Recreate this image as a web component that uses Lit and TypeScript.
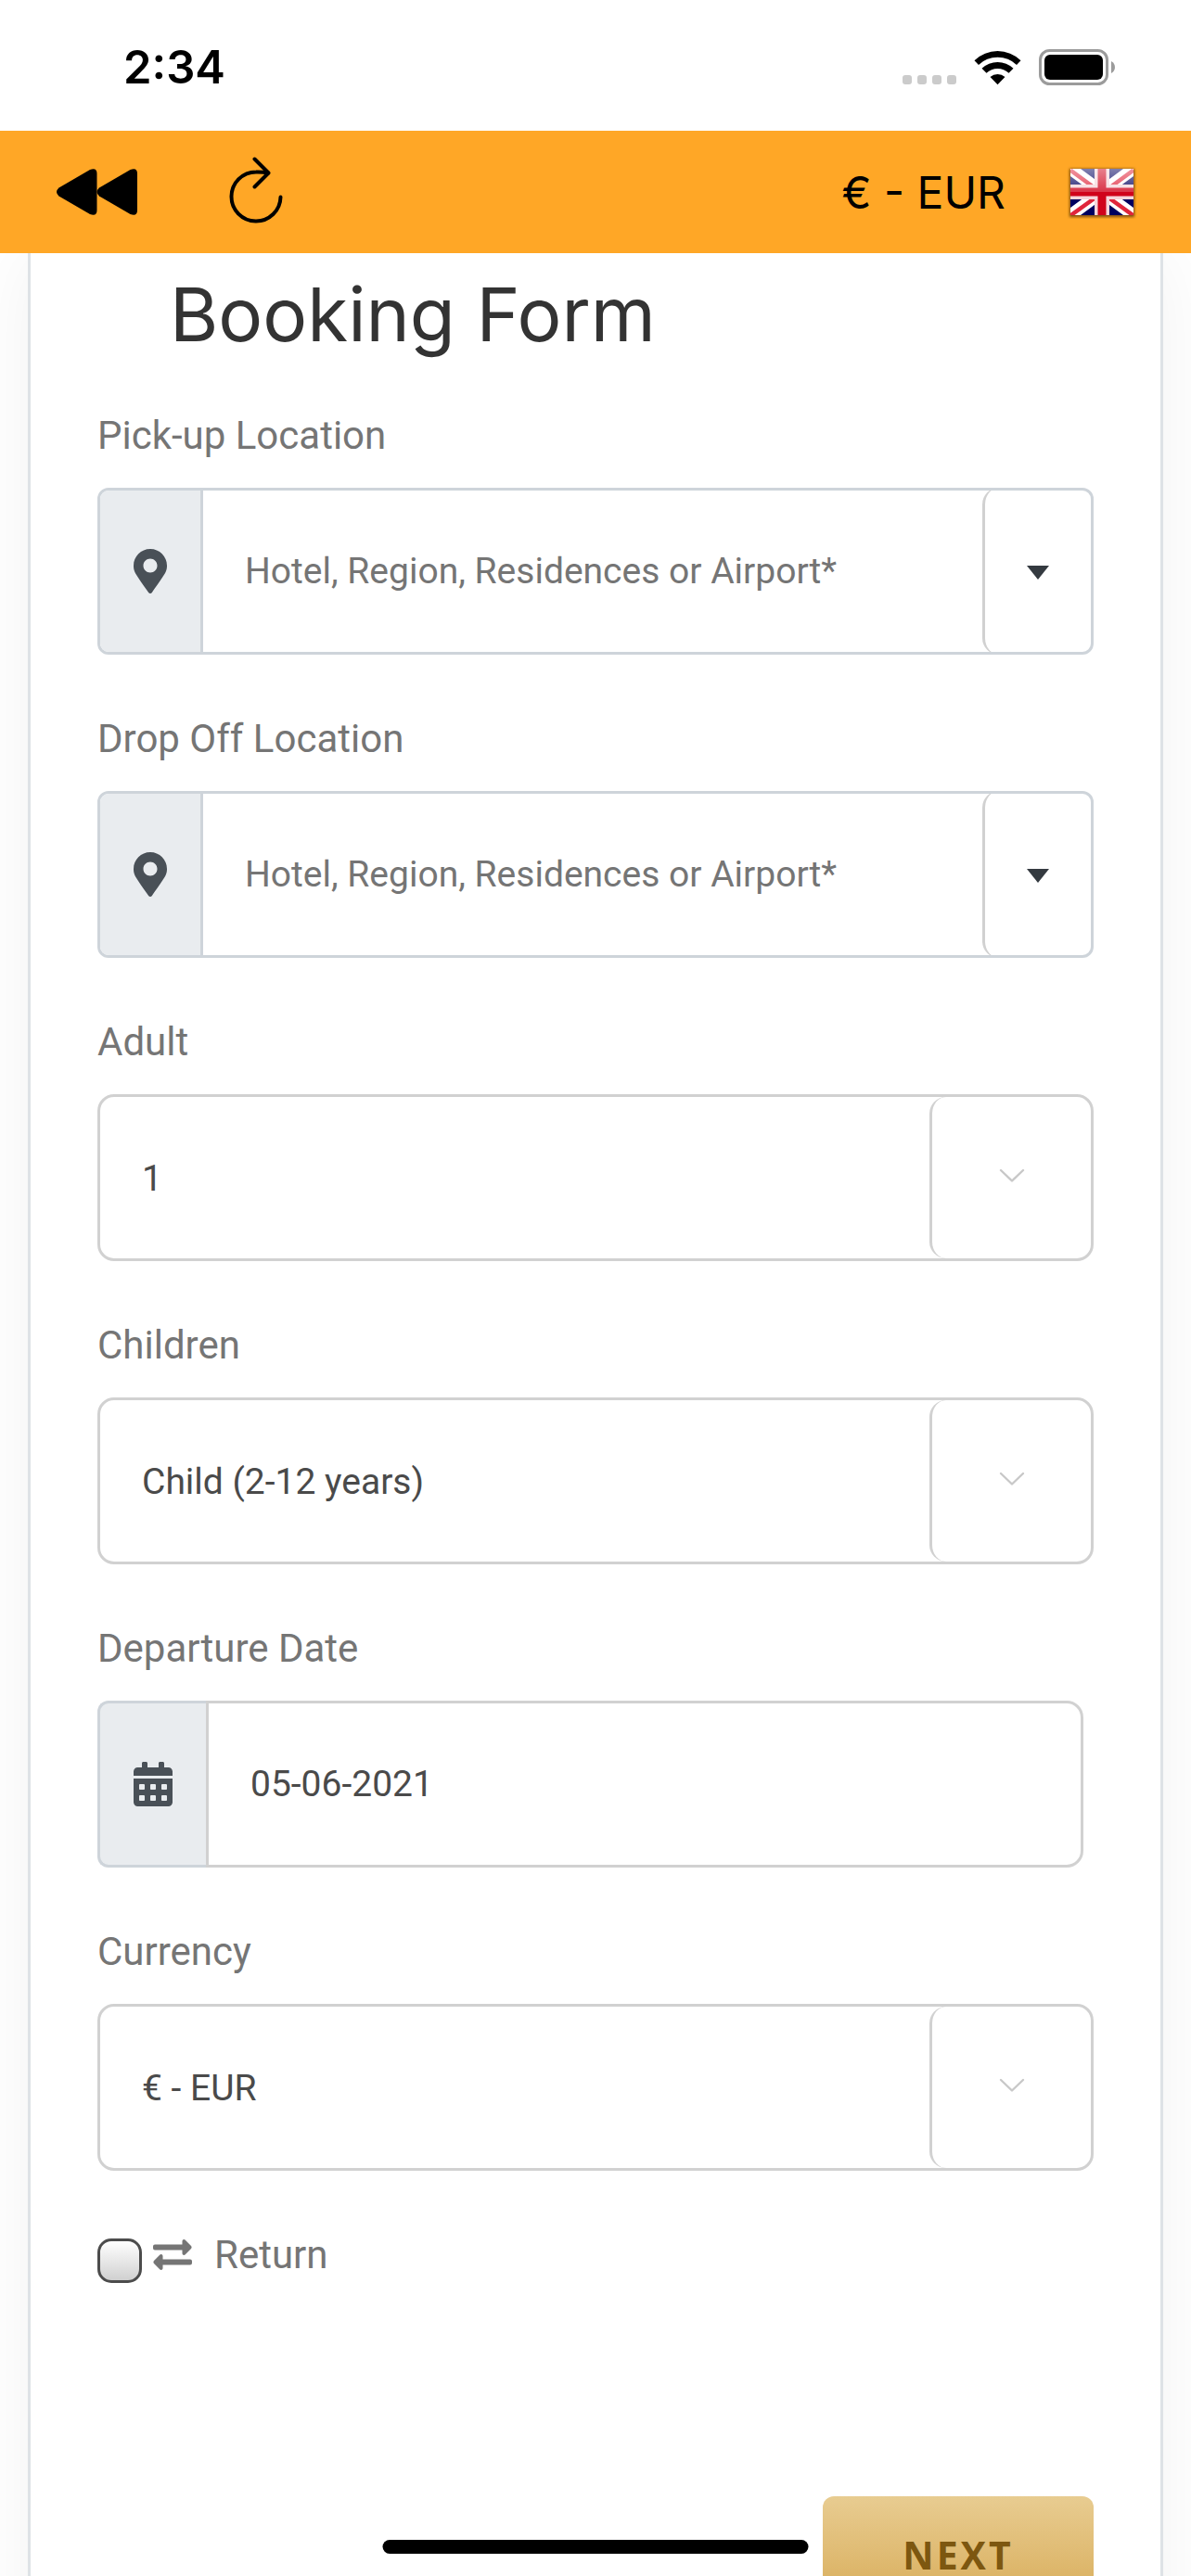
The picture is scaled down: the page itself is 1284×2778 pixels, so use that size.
import { LitElement, html, css, svg } from "lit";
import { customElement, property } from "lit/decorators.js";

const chevronIcon = svg`<svg class="chevron" viewBox="0 0 28 16" aria-hidden="true">
  <path d="M2 2 14 13.5 26 2" fill="none" stroke="#c8c8c8" stroke-width="2.4" stroke-linecap="round" stroke-linejoin="round"/>
</svg>`;

const pinIcon = svg`<svg class="pin" viewBox="0 0 384 512" aria-hidden="true">
  <path fill="#495057" d="M172.268 501.67C26.97 291.031 0 269.413 0 192 0 85.961 85.961 0 192 0s192 85.961 192 192c0 77.413-26.97 99.031-172.268 309.67-9.535 13.774-29.93 13.773-39.464 0zM192 272c44.183 0 80-35.817 80-80s-35.817-80-80-80-80 35.817-80 80 35.817 80 80 80z"/>
</svg>`;

const calendarIcon = svg`<svg class="calendar" viewBox="0 0 448 512" aria-hidden="true">
  <path fill="#495057" d="M0 464c0 26.5 21.5 48 48 48h352c26.5 0 48-21.5 48-48V192H0v272zm320-196c0-6.600 5.400-12 12-12h40c6.600 0 12 5.400 12 12v40c0 6.600-5.400 12-12 12h-40c-6.600 0-12-5.400-12-12v-40zm0 128c0-6.600 5.400-12 12-12h40c6.600 0 12 5.400 12 12v40c0 6.600-5.400 12-12 12h-40c-6.600 0-12-5.400-12-12v-40zM192 268c0-6.600 5.400-12 12-12h40c6.600 0 12 5.400 12 12v40c0 6.600-5.400 12-12 12h-40c-6.600 0-12-5.400-12-12v-40zm0 128c0-6.600 5.400-12 12-12h40c6.600 0 12 5.400 12 12v40c0 6.600-5.400 12-12 12h-40c-6.600 0-12-5.400-12-12v-40zM64 268c0-6.600 5.400-12 12-12h40c6.600 0 12 5.400 12 12v40c0 6.600-5.400 12-12 12H76c-6.600 0-12-5.400-12-12v-40zm0 128c0-6.600 5.400-12 12-12h40c6.600 0 12 5.400 12 12v40c0 6.600-5.400 12-12 12H76c-6.600 0-12-5.400-12-12v-40zM400 64h-48V16c0-8.800-7.200-16-16-16h-32c-8.800 0-16 7.200-16 16v48H160V16c0-8.800-7.200-16-16-16h-32c-8.800 0-16 7.200-16 16v48H48C21.500 64 0 85.500 0 112v48h448v-48c0-26.500-21.500-48-48-48z"/>
</svg>`;

const exchangeIcon = svg`<svg class="exchange" viewBox="0 0 42 34" aria-hidden="true">
  <g fill="#757575">
    <path d="M2 5.500H31.500V2C31.500 0.200 33.500-0.600 34.800 0.700L41 7Q42.200 8.500 41 10L34.800 16.300C33.500 17.600 31.500 16.800 31.500 15V11.500H2A2 2 0 0 1 0 9.500V7.500A2 2 0 0 1 2 5.500Z"/>
    <path d="M40 21.500H10.500V18C10.500 16.200 8.500 15.400 7.200 16.700L1 23Q-0.200 24.500 1 26L7.200 32.300C8.500 33.600 10.500 32.800 10.500 31V27.500H40A2 2 0 0 0 42 25.500V23.500A2 2 0 0 0 40 21.500Z"/>
  </g>
</svg>`;

const sharedStyles = css`
  :host {
    display: block;
    font-family: Roboto, "Liberation Sans", sans-serif;
  }
  * {
    box-sizing: border-box;
  }
  button,
  input,
  select {
    margin: 0;
    padding: 0;
    border: 0;
    background: none;
    font: inherit;
    color: inherit;
    appearance: none;
    border-radius: 0;
  }
  svg {
    display: block;
    flex: none;
  }
`;

const fieldStyles = css`
  .field {
    display: flex;
    flex-direction: column;
    gap: 26px;
  }
  .label {
    font-size: 42px;
    line-height: 61px;
    color: #757575;
  }
  .addon {
    display: flex;
    align-items: center;
    justify-content: center;
    padding: 0 36px;
    background: #e9ecef;
  }
  .text {
    flex: 1;
    min-width: 0;
    padding: 0 45px;
    font-size: 39px;
    line-height: 60px;
    color: #495057;
  }
`;

@customElement("status-bar")
class StatusBar extends LitElement {
  static styles = [
    sharedStyles,
    css`
      .bar {
        display: flex;
        align-items: center;
        justify-content: space-between;
        height: 141px;
        padding: 4px 82px 0 133px;
        background: #fff;
      }
      .time {
        font: 600 49px/60px Inter, "Liberation Sans", sans-serif;
        color: #000;
      }
      .signals {
        display: flex;
        align-items: center;
        gap: 19px;
      }
      .dots { width: 58px; height: 39px; }
      .wifi { width: 51px; height: 39px; }
      .battery { width: 82px; height: 39px; }
    `,
  ];

  render() {
    return html`
      <div class="bar">
        <span class="time">2:34</span>
        <div class="signals">
          <svg class="dots" viewBox="0 0 58 39" aria-hidden="true">
            ${[0, 16, 32, 48].map(
              (x) => svg`<rect x=${x} y="28" width="10" height="10" rx="3" fill="#cbcbcb"/>`
            )}
          </svg>
          <svg class="wifi" viewBox="0 0 51 39" aria-hidden="true">
            <path d="M0.500 12.200A36 36 0 0 1 50.500 12.200L46 17A29.500 29.500 0 0 0 5 17Z"/>
            <path d="M8.500 20.800A24.500 24.500 0 0 1 42.500 20.800L37.500 25.800A17.500 17.500 0 0 0 13.500 25.800Z"/>
            <path d="M17.500 30A12 12 0 0 1 33.500 30L25.500 38.300Z"/>
          </svg>
          <svg class="battery" viewBox="0 0 82 39" aria-hidden="true">
            <rect x="1.500" y="1.500" width="72" height="36" rx="10" fill="none" stroke="#9b9b9b" stroke-width="3"/>
            <rect x="6" y="6" width="63" height="27" rx="6"/>
            <path d="M78 13C83.300 15.500 83.300 23.500 78 26Z" fill="#9b9b9b"/>
          </svg>
        </div>
      </div>
    `;
  }
}

@customElement("nav-header")
class NavHeader extends LitElement {
  static styles = [
    sharedStyles,
    css`
      .bar {
        display: flex;
        align-items: center;
        justify-content: space-between;
        height: 132px;
        padding: 0 58px 0 60px;
        background: #ffa726;
      }
      .group {
        display: flex;
        align-items: center;
      }
      .left { gap: 98px; }
      .right { gap: 66px; }
      button {
        display: flex;
        align-items: center;
        cursor: pointer;
      }
      .rewind { width: 89px; height: 52px; }
      .reload { width: 58px; height: 76px; }
      .flag { width: 76px; height: 58px; }
      .currency {
        padding-top: 2px;
        font: 400 48px/60px Inter, "Liberation Sans", sans-serif;
        color: #000;
      }
    `,
  ];

  render() {
    return html`
      <header class="bar">
        <div class="group left">
          <button aria-label="Back">
            <svg class="rewind" viewBox="0 0 89 52">
              <path d="M3.500 21.500 37 2Q44.500-0.500 44.500 6V46Q44.500 52.500 37 50L3.500 30.500Q-1.500 26 3.500 21.500Z"/>
              <path d="M47 21.500 80.500 2Q88-0.500 88 6V46Q88 52.500 80.500 50L47 30.500Q42 26 47 21.500Z"/>
            </svg>
          </button>
          <button aria-label="Reload">
            <svg class="reload" viewBox="0 0 58 76" fill="none" stroke="#000" stroke-width="4" stroke-linecap="round" stroke-linejoin="round">
              <path d="M55.500 43.500A26.500 26.500 0 1 1 29 16.500Q36 16.300 42 17.500"/>
              <path d="M27.500 2.500 42.500 17.500 27.500 32.500"/>
            </svg>
          </button>
        </div>
        <div class="group right">
          <button class="currency">€ - EUR</button>
          <button aria-label="English">
            <svg class="flag" viewBox="0 0 76 58">
              <defs>
                <linearGradient id="sheen" x1="0" y1="0" x2="0" y2="1">
                  <stop offset="0" stop-color="#fff" stop-opacity="0.500"/>
                  <stop offset="0.500" stop-color="#fff" stop-opacity="0.200"/>
                  <stop offset="0.510" stop-color="#fff" stop-opacity="0"/>
                </linearGradient>
                <filter id="soft" x="-20%" y="-20%" width="140%" height="140%">
                  <feGaussianBlur stdDeviation="1.500"/>
                </filter>
                <clipPath id="frame"><rect x="4" y="4" width="68" height="50"/></clipPath>
              </defs>
              <rect x="3" y="4" width="70" height="52" fill="#7a4a08" filter="url(#soft)"/>
              <g clip-path="url(#frame)">
                <rect x="4" y="4" width="68" height="50" fill="#00005f"/>
                <path d="M4 4 72 54M72 4 4 54" stroke="#fff" stroke-width="13"/>
                <path d="M4 5.500 38 30.500M72 5.500 38 30.500M38 30 4 54.500M38 30 72 54.500" stroke="#e0263c" stroke-width="4.500"/>
                <path d="M38 4V54M4 29H72" stroke="#f6d5da" stroke-width="16"/>
                <path d="M38 4V54M4 29H72" stroke="#d0021b" stroke-width="9"/>
                <rect x="4" y="4" width="68" height="50" fill="url(#sheen)"/>
              </g>
            </svg>
          </button>
        </div>
      </header>
    `;
  }
}

@customElement("location-field")
class LocationField extends LitElement {
  @property() label = "";

  static styles = [
    sharedStyles,
    fieldStyles,
    css`
      .group {
        display: flex;
        height: 180px;
        border: 3px solid #ced4da;
        border-radius: 12px;
        overflow: hidden;
      }
      .addon { border-right: 3px solid #ced4da; }
      .pin { width: 36px; height: 48px; }
      .text::placeholder {
        color: #757575;
        opacity: 1;
      }
      .toggle {
        display: flex;
        align-items: center;
        justify-content: center;
        width: 117px;
        margin: -3px 0;
        padding-top: 2px;
        border-left: 3px solid #d1d1d1;
        border-radius: 18px 0 0 18px;
        cursor: pointer;
      }
      .caret { width: 24px; height: 15px; }
    `,
  ];

  render() {
    return html`
      <div class="field">
        <label class="label" for="place">${this.label}</label>
        <div class="group">
          <span class="addon">${pinIcon}</span>
          <input class="text" id="place" type="text" placeholder="Hotel, Region, Residences or Airport*" />
          <button class="toggle" type="button" aria-label="Show locations">
            <svg class="caret" viewBox="0 0 24 15"><path d="M0 0H24L12 15Z" fill="#343a40"/></svg>
          </button>
        </div>
      </div>
    `;
  }
}

@customElement("select-field")
class SelectField extends LitElement {
  @property() label = "";
  @property({ attribute: false }) options: string[] = [];

  static styles = [
    sharedStyles,
    fieldStyles,
    css`
      .group {
        display: grid;
        grid-template-columns: 1fr 174px;
        height: 180px;
        border: 3px solid #d1d1d1;
        border-radius: 18px;
      }
      .select {
        grid-area: 1 / 1 / 2 / 3;
        padding: 2px 186px 0 45px;
        font-size: 39px;
        color: #4a4a4a;
        cursor: pointer;
      }
      .arrow {
        grid-area: 1 / 2 / 2 / 3;
        display: flex;
        align-items: center;
        justify-content: center;
        padding-bottom: 4px;
        border-left: 3px solid #d1d1d1;
        border-radius: 18px;
        pointer-events: none;
      }
      .chevron { width: 28px; height: 16px; }
    `,
  ];

  render() {
    return html`
      <div class="field">
        <label class="label" for="choice">${this.label}</label>
        <div class="group">
          <select class="select" id="choice">
            ${this.options.map((o) => html`<option>${o}</option>`)}
          </select>
          <span class="arrow">${chevronIcon}</span>
        </div>
      </div>
    `;
  }
}

@customElement("date-field")
class DateField extends LitElement {
  @property() label = "";
  @property() value = "";

  static styles = [
    sharedStyles,
    fieldStyles,
    css`
      .group {
        display: flex;
        height: 180px;
        margin-right: 11px;
      }
      .addon {
        border: 3px solid #ced4da;
        border-right: 0;
        border-radius: 12px 0 0 12px;
      }
      .calendar { width: 42px; height: 48px; }
      .text {
        border: 3px solid #d1d1d1;
        border-radius: 0 18px 18px 0;
        color: #4a4a4a;
      }
    `,
  ];

  render() {
    return html`
      <div class="field">
        <label class="label" for="date">${this.label}</label>
        <div class="group">
          <span class="addon">${calendarIcon}</span>
          <input class="text" id="date" type="text" .value=${this.value} />
        </div>
      </div>
    `;
  }
}

@customElement("app-root")
class AppRoot extends LitElement {
  static styles = [
    sharedStyles,
    css`
      .screen {
        display: flex;
        flex-direction: column;
        height: 100vh;
        overflow: hidden;
        background: #fff;
      }
      .scroller {
        flex: 1;
        min-height: 0;
        overflow: hidden auto;
        scrollbar-width: none;
        padding: 0 30px;
      }
      .card {
        padding: 18px 72px 60px;
        border: 3px solid #dee2e6;
        border-top: 0;
        background: #fff;
        box-shadow: 0 0 75px rgba(0, 0, 0, 0.055);
      }
      .title {
        margin: 0 0 52px;
        padding-left: 78px;
        font: 400 80px/96px Inter, "Liberation Sans", sans-serif;
        color: #333;
      }
      .form {
        display: flex;
        flex-direction: column;
        gap: 60px;
      }
      .return {
        display: flex;
        align-items: flex-start;
        gap: 12px;
        font-size: 42px;
        line-height: 61px;
        color: #757575;
      }
      .check {
        width: 48px;
        height: 48px;
        margin-top: 13px;
        border: 3px solid #4c4c4c;
        border-radius: 15px;
        background: linear-gradient(#fff, #d0d0d0);
      }
      .return label {
        display: flex;
        align-items: center;
        gap: 24px;
      }
      .exchange { width: 42px; height: 34px; }
      .actions {
        display: flex;
        justify-content: flex-end;
        padding-top: 170px;
      }
      .next {
        width: 292px;
        height: 126px;
        border-radius: 12px;
        background: linear-gradient(#e8cc91, #d7aa55);
        font: 700 41px/60px "Open Sans", "Noto Sans", sans-serif;
        letter-spacing: 3px;
        color: #7d5710;
        cursor: pointer;
      }
      .home-indicator {
        position: fixed;
        left: 50%;
        bottom: 24px;
        width: 459px;
        height: 15px;
        border-radius: 8px;
        background: #000;
        transform: translateX(-50%);
      }
    `,
  ];

  render() {
    return html`
      <div class="screen">
        <status-bar></status-bar>
        <nav-header></nav-header>
        <main class="scroller">
          <div class="card">
            <h1 class="title">Booking Form</h1>
            <form class="form" @submit=${(e: Event) => e.preventDefault()}>
              <location-field label="Pick-up Location"></location-field>
              <location-field label="Drop Off Location"></location-field>
              <select-field label="Adult" .options=${["1", "2", "3", "4"]}></select-field>
              <select-field label="Children" .options=${["Child (2-12 years)", "1", "2"]}></select-field>
              <date-field label="Departure Date" value="05-06-2021"></date-field>
              <select-field label="Currency" .options=${["€ - EUR", "$ - USD", "£ - GBP"]}></select-field>
              <div class="return">
                <input class="check" id="return" type="checkbox" />
                <label for="return">${exchangeIcon}<span>Return</span></label>
              </div>
              <div class="actions">
                <button class="next" type="submit">NEXT</button>
              </div>
            </form>
          </div>
        </main>
        <div class="home-indicator"></div>
      </div>
    `;
  }
}
